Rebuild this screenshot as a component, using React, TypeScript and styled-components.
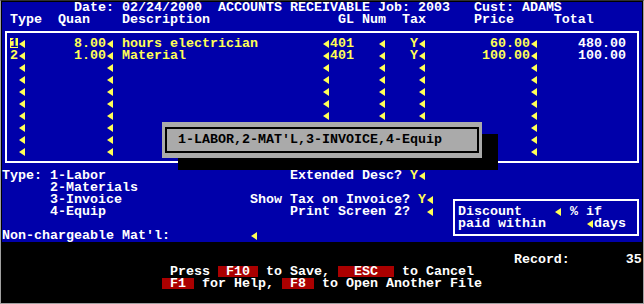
import styled, { createGlobalStyle } from "styled-components";
import type { ReactNode } from "react";

const CELL_W = 8;
const CELL_H = 12;
const BLUE = "#0000aa";
const YELLOW = "#ffff55";
const WHITE = "#ffffff";
const GRAY = "#aaaaaa";
const RED = "#aa0000";

const sp = (n: number) => " ".repeat(n);

const GlobalStyle = createGlobalStyle`
  html, body {
    margin: 0;
    padding: 0;
    background: #000;
  }
`;

const Window = styled.div`
  width: 644px;
  height: 304px;
  box-sizing: border-box;
  padding: 1px;
  background: #000;
  border: 1px solid #a0a0a0;
  border-top-color: #303030;
`;

const Screen = styled.div`
  position: relative;
  width: 640px;
  height: 300px;
  display: flex;
  flex-direction: column;
  font-family: "Liberation Mono", "DejaVu Sans Mono", monospace;
  font-size: 13.333px;
  font-weight: bold;
  line-height: ${CELL_H}px;
  color: ${WHITE};
`;

const BluePane = styled.div`
  height: ${CELL_H * 20}px;
  background: ${BLUE};
  display: flex;
  flex-direction: column;
`;

const Footer = styled.div`
  height: ${CELL_H * 5}px;
  background: #000;
`;

const Line = styled.div`
  height: ${CELL_H}px;
  white-space: pre;
`;

const Hi = styled.span`
  color: ${YELLOW};
`;

const Arrow = styled.span`
  display: inline-block;
  width: ${CELL_W}px;
  height: ${CELL_H}px;
  vertical-align: top;

  &::before {
    content: "";
    display: block;
    width: 0;
    height: 0;
    margin: 2px 0 0 1px;
    border-right: 6px solid ${YELLOW};
    border-top: 4px solid transparent;
    border-bottom: 4px solid transparent;
  }
`;

const Field = styled.span<{ $w: number; $align?: "left" | "right"; $tone?: "data" | "plain" }>`
  display: inline-block;
  width: ${p => p.$w * CELL_W}px;
  height: ${CELL_H}px;
  vertical-align: top;
  white-space: pre;
  text-align: ${p => p.$align ?? "left"};
  color: ${p => (p.$tone === "plain" ? WHITE : YELLOW)};
`;

const Cursor = styled.span`
  display: inline-block;
  width: ${CELL_W}px;
  height: 10px;
  vertical-align: top;
  background: ${YELLOW};
  color: ${BLUE};
`;

const ItemsFrame = styled.div`
  margin: 5px 3px 7px;
  padding: 5px 3px 3px;
  border: 2px solid ${WHITE};
  height: ${CELL_H * 10}px;
`;

const ItemRow = styled.div`
  height: ${CELL_H}px;
  white-space: pre;
`;

const Options = styled.div`
  display: flex;
  height: ${CELL_H * 6}px;
`;

const OptionsLeft = styled.div`
  width: ${CELL_W * 56}px;
`;

const OptionsRight = styled.div`
  width: ${CELL_W * 24}px;
  padding-top: ${CELL_H * 2}px;
`;

const DiscountBox = styled.div`
  margin: 5px 3px 6px;
  padding: 5px 3px 4px;
  border: 2px solid ${WHITE};
  height: ${CELL_H * 2}px;
`;

const Popup = styled.div`
  position: absolute;
  left: ${CELL_W * 20}px;
  top: ${CELL_H * 10}px;
  width: ${CELL_W * 40}px;
  height: ${CELL_H * 3}px;
  box-sizing: border-box;
  padding: 5px 3px;
  background: ${GRAY};
  box-shadow: ${CELL_W * 2}px ${CELL_H}px 0 #000;
`;

const PopupFrame = styled.div`
  height: 100%;
  box-sizing: border-box;
  border: 2px solid #000;
  padding: 5px 0 0 11px;
  color: #000;
  white-space: pre;
`;

const KeyCap = styled.span`
  display: inline-block;
  height: 11px;
  vertical-align: top;
  background: ${RED};
  color: ${WHITE};
`;

type Item = {
  type: string;
  quan: string;
  desc: string;
  gl: string;
  tax: string;
  price: string;
  total: string;
  cursor?: boolean;
};

const items: Item[] = [
  { type: "1", quan: "8.00", desc: "hours electrician", gl: "401", tax: "Y", price: "60.00", total: "480.00", cursor: true },
  { type: "2", quan: "1.00", desc: "Material", gl: "401", tax: "Y", price: "100.00", total: "100.00" },
  ...Array.from({ length: 8 }, () => ({ type: "", quan: "", desc: "", gl: "", tax: "", price: "", total: "" })),
];

function LineItem({ item }: { item: Item }) {
  return (
    <ItemRow>
      {item.cursor ? <Cursor>{item.type}</Cursor> : <Field $w={1}>{item.type}</Field>}
      <Arrow />
      <Field $w={10} $align="right">{item.quan}</Field>
      <Arrow />
      <Field $w={1} />
      <Field $w={25}>{item.desc}</Field>
      <Arrow />
      <Field $w={6}>{item.gl}</Field>
      <Arrow />
      <Field $w={3} />
      <Field $w={1}>{item.tax}</Field>
      <Arrow />
      <Field $w={13} $align="right">{item.price}</Field>
      <Arrow />
      <Field $w={11} $align="right" $tone="plain">{item.total}</Field>
      <Field $w={1} />
    </ItemRow>
  );
}

function Key({ children }: { children: ReactNode }) {
  return <KeyCap>{children}</KeyCap>;
}

export default function App() {
  return (
    <>
      <GlobalStyle />
      <Window>
        <Screen>
          <BluePane>
            <Line>{sp(9) + "Date: 02/24/2000  ACCOUNTS RECEIVABLE Job: 2003   Cust: ADAMS"}</Line>
            <Line>{" Type  Quan    Description" + sp(16) + "GL Num  Tax      Price     Total"}</Line>
            <ItemsFrame>
              {items.map((item, i) => (
                <LineItem key={i} item={item} />
              ))}
            </ItemsFrame>
            <Options>
              <OptionsLeft>
                <Line>
                  {"Type: 1-Labor" + sp(23) + "Extended Desc? "}
                  <Hi>Y</Hi>
                  <Arrow />
                </Line>
                <Line>{sp(6) + "2-Materials"}</Line>
                <Line>
                  {sp(6) + "3-Invoice" + sp(16) + "Show Tax on Invoice? "}
                  <Hi>Y</Hi>
                  <Arrow />
                </Line>
                <Line>
                  {sp(6) + "4-Equip" + sp(23) + "Print Screen 2?  "}
                  <Arrow />
                </Line>
                <Line />
                <Line>
                  {"Non-chargeable Mat'l:" + sp(10)}
                  <Arrow />
                </Line>
              </OptionsLeft>
              <OptionsRight>
                <DiscountBox>
                  <Line>
                    {"Discount" + sp(4)}
                    <Arrow />
                    {" % if"}
                  </Line>
                  <Line>
                    {"paid within" + sp(5)}
                    <Arrow />
                    {"days"}
                  </Line>
                </DiscountBox>
              </OptionsRight>
            </Options>
          </BluePane>
          <Footer>
            <Line />
            <Line>{sp(64) + "Record:" + sp(7) + "35"}</Line>
            <Line>
              {sp(21) + "Press "}
              <Key>{" F10 "}</Key>
              {" to Save, "}
              <Key>{"  ESC  "}</Key>
              {" to Cancel"}
            </Line>
            <Line>
              {sp(20)}
              <Key>{" F1 "}</Key>
              {" for Help, "}
              <Key>{" F8 "}</Key>
              {" to Open Another File"}
            </Line>
          </Footer>
          <Popup>
            <PopupFrame>{"1-LABOR,2-MAT'L,3-INVOICE,4-Equip"}</PopupFrame>
          </Popup>
        </Screen>
      </Window>
    </>
  );
}
